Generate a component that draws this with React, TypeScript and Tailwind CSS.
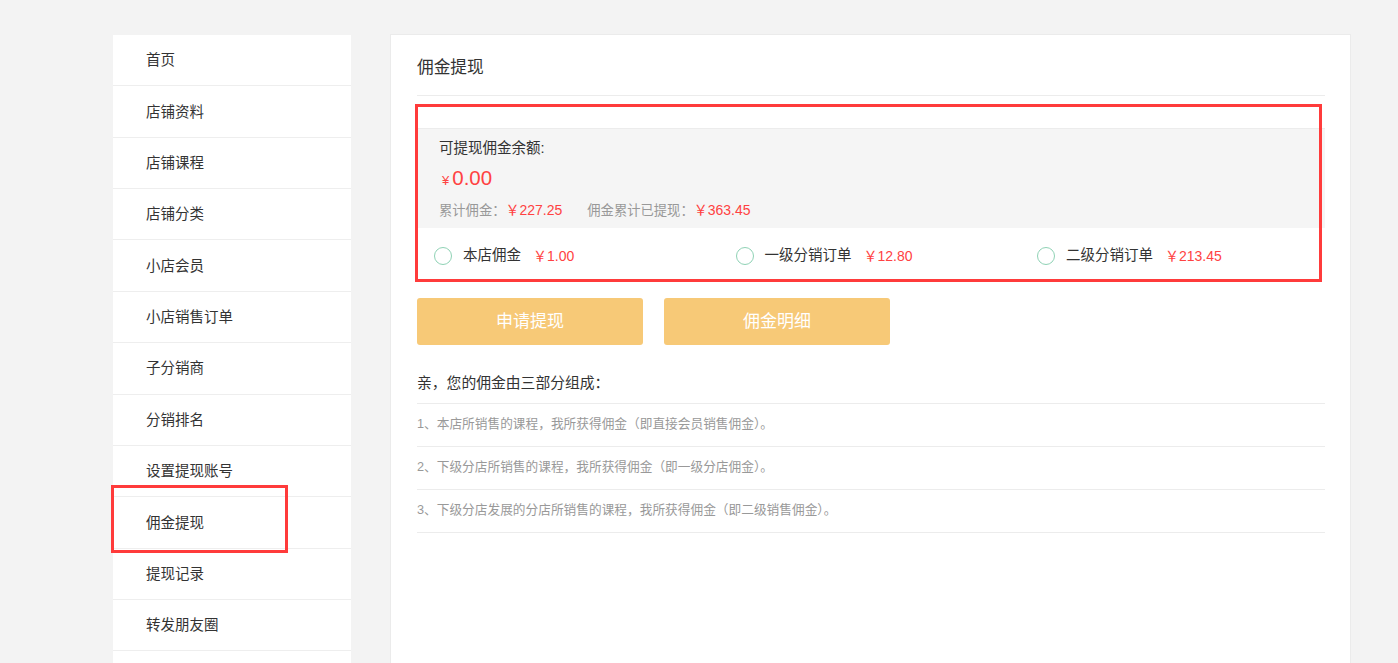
import React from "react";

const menu = [
  "首页",
  "店铺资料",
  "店铺课程",
  "店铺分类",
  "小店会员",
  "小店销售订单",
  "子分销商",
  "分销排名",
  "设置提现账号",
  "佣金提现",
  "提现记录",
  "转发朋友圈",
  "",
];

const radios = [
  { label: "本店佣金", amount: "￥1.00" },
  { label: "一级分销订单", amount: "￥12.80" },
  { label: "二级分销订单", amount: "￥213.45" },
];

const notes = [
  "1、本店所销售的课程，我所获得佣金（即直接会员销售佣金）。",
  "2、下级分店所销售的课程，我所获得佣金（即一级分店佣金）。",
  "3、下级分店发展的分店所销售的课程，我所获得佣金（即二级销售佣金）。",
];

export default function App() {
  return (
    <div
      className="h-[663px] overflow-hidden bg-[#f3f3f3] text-[#333]"
      style={{ fontFamily: '"Liberation Sans", "Noto Sans CJK SC", sans-serif' }}
    >
      <div className="flex items-start pl-[113px] pt-[34px]">
        {/* Sidebar */}
        <div className="relative mt-px w-[238px] shrink-0 bg-white">
          {menu.map((m, i) => (
            <div
              key={i}
              className="flex h-[51.36px] items-center border-b border-[#eeeeee] pl-[33px] pt-[2px] text-[14.5px]"
            >
              {m}
            </div>
          ))}
          <div className="pointer-events-none absolute left-[-2px] top-[450px] h-[68px] w-[177px] border-[3px] border-[#ff3b3b]" />
        </div>

        {/* Main panel */}
        <div className="relative ml-[39px] h-[700px] w-[961px] shrink-0 border border-[#ebebeb] bg-white pl-[26px] pr-[25px]">
          <div className="h-[61px] border-b border-[#ececec] pt-[23px] text-[16.7px] leading-[20px]">
            佣金提现
          </div>

          <div className="mt-[32px] h-[100px] overflow-hidden border-t border-[#ececec] bg-[#f5f5f5] pl-[22px] pt-[9px]">
            <div className="h-[20px] text-[14.5px] leading-[20px]">可提现佣金余额:</div>
            <div className="mt-[5px] flex h-[30px] items-baseline leading-[30px] text-[#ff4242]">
              <span className="ml-[3px] mr-[3px] text-[13px]">¥</span>
              <span className="text-[20.5px]">0.00</span>
            </div>
            <div className="mt-[7px] flex h-[20px] items-baseline leading-[20px]">
              <span className="text-[13.3px] text-[#999]">累计佣金：</span>
              <span className="mr-[25px] text-[14px] text-[#ff4242]">￥227.25</span>
              <span className="text-[13.3px] text-[#999]">佣金累计已提现：</span>
              <span className="text-[14px] text-[#ff4242]">￥363.45</span>
            </div>
          </div>

          <div className="flex h-[54px] items-center pl-[17px] pt-[2px]">
            {radios.map((r) => (
              <div key={r.label} className="flex w-[301.5px] shrink-0 items-center text-[14.5px]">
                <span className="h-[18px] w-[18px] shrink-0 rounded-full border-[1.5px] border-[#8fd2b5]" />
                <span className="ml-[11px]">{r.label}</span>
                <span className="ml-[12px] text-[14px] text-[#ff4242]">{r.amount}</span>
              </div>
            ))}
          </div>

          <div className="mt-[16px] flex gap-[21px]">
            <button className="flex h-[47px] w-[226px] items-center justify-center rounded-[3px] bg-[#f7c977] text-[17px] text-white">
              申请提现
            </button>
            <button className="flex h-[47px] w-[226px] items-center justify-center rounded-[3px] bg-[#f7c977] text-[17px] text-white">
              佣金明细
            </button>
          </div>

          <div className="mt-[28px] h-[31px] border-b border-[#ececec] text-[14.8px] leading-[20px]">
            亲，您的佣金由三部分组成：
          </div>
          {notes.map((n) => (
            <div
              key={n}
              className="flex h-[43px] items-center border-b border-[#ececec] text-[12.7px] text-[#999]"
            >
              {n}
            </div>
          ))}

          <div className="pointer-events-none absolute left-[24px] top-[69px] h-[178px] w-[907px] border-[3px] border-[#ff3b3b]" />
        </div>
      </div>
    </div>
  );
}
